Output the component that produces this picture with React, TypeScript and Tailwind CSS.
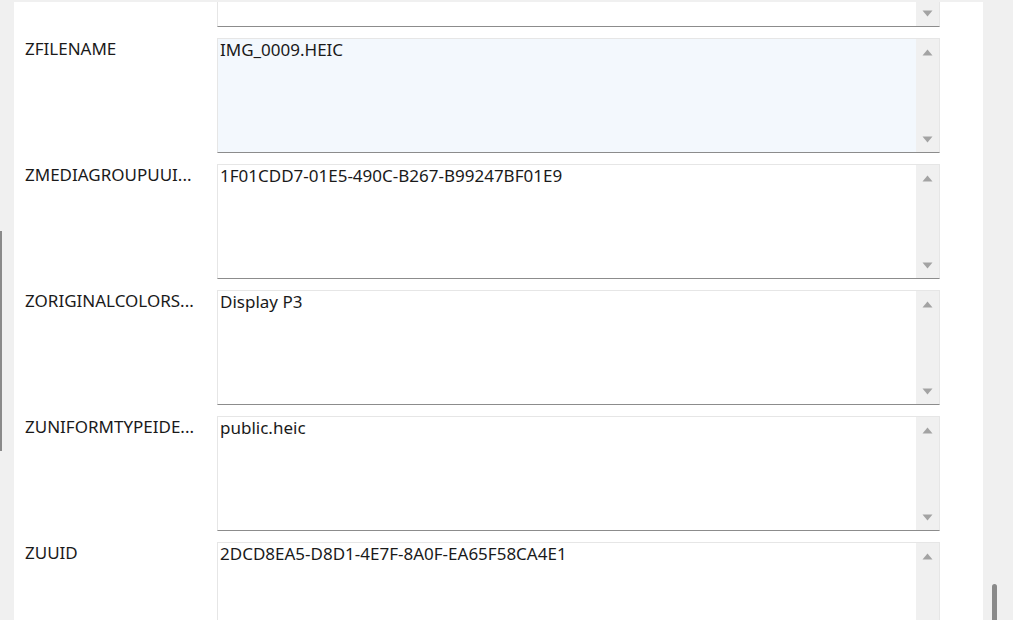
import React from 'react';

const rows = [
    { label: '', value: '' },
    { label: 'ZFILENAME', value: 'IMG_0009.HEIC', active: true },
    { label: 'ZMEDIAGROUPUUI...', value: '1F01CDD7-01E5-490C-B267-B99247BF01E9' },
    { label: 'ZORIGINALCOLORS...', value: 'Display P3' },
    { label: 'ZUNIFORMTYPEIDE...', value: 'public.heic' },
    { label: 'ZUUID', value: '2DCD8EA5-D8D1-4E7F-8A0F-EA65F58CA4E1' },
];

const Arrow: React.FC<{ up?: boolean }> = ({ up }) => (
    <svg width="11" height="7" viewBox="0 0 11 7" className="text-[#a3a3a3]">
        <path d={up ? 'M5.5 0.5 L10.5 6.5 L0.5 6.5 Z' : 'M0.5 0.5 L10.5 0.5 L5.5 6.5 Z'} fill="currentColor" />
    </svg>
);

export default function App() {
    return (
        <div className="w-[1013px] h-[620px] overflow-hidden bg-[#f0f0f0] flex relative" style={{ fontFamily: '"Noto Sans", "Open Sans", sans-serif' }}>
            {/* left edge line */}
            <div className="absolute left-0 top-[231px] w-[2px] h-[220px] bg-[#8a8a8a]" />
            <div className="ml-[14px] mt-[2px] w-[969px] bg-white overflow-hidden">
                <div className="flex flex-col gap-[11px] mt-[-90px]">
                    {rows.map((r, i) => (
                        <div key={i} className="flex">
                            <div className="w-[203px] pl-[11px] pt-[0px] text-[17px] text-[#1a1a1a] leading-[22px]">{r.label}</div>
                            <div className={`w-[723px] h-[115px] flex border border-[#e6e6e6] border-b-[#8c8c8c] ${r.active ? 'bg-[#f3f8fd]' : 'bg-white'}`}>
                                <div className="flex-1 px-[2px] pt-[0px] text-[17px] text-[#1a1a1a] leading-[22px]">{r.value}</div>
                                <div className="w-[23px] bg-[#f0f0f0] flex flex-col items-center justify-between pt-[10px] pb-[9px]">
                                    <Arrow up />
                                    <Arrow />
                                </div>
                            </div>
                        </div>
                    ))}
                </div>
            </div>
            {/* page scrollbar */}
            <div className="flex-1 relative">
                <div className="absolute left-[9px] top-[584px] w-[5px] h-[40px] bg-[#8a8a8a] rounded-t-sm" />
            </div>
        </div>
    );
}
